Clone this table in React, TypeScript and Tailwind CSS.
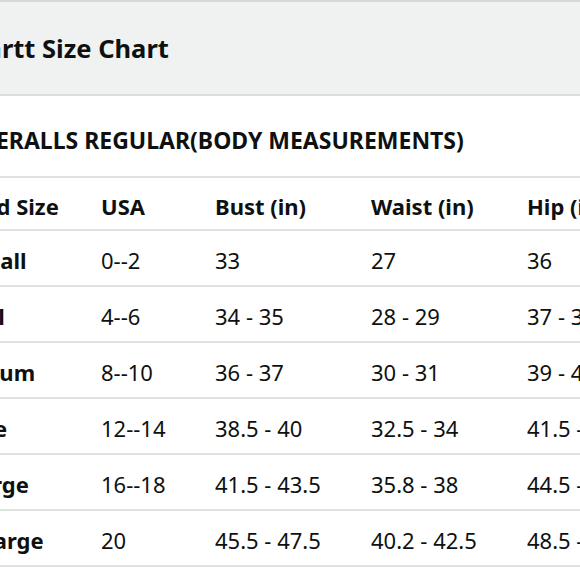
const rows = [
  ["X-Small", "0--2", "33", "27", "36"],
  ["Small", "4--6", "34 - 35", "28 - 29", "37 - 38"],
  ["Medium", "8--10", "36 - 37", "30 - 31", "39 - 40"],
  ["Large", "12--14", "38.5 - 40", "32.5 - 34", "41.5 - 43"],
  ["X-Large", "16--18", "41.5 - 43.5", "35.8 - 38", "44.5 - 46.5"],
  ["XX-Large", "20", "45.5 - 47.5", "40.2 - 42.5", "48.5 - 50.5"],
];

const cols = "grid grid-cols-[156px_114px_156px_156px_1fr] items-center";

export default function App() {
  return (
    <div className="w-[580px] h-[580px] overflow-hidden bg-white text-[#0f1111] font-['Noto_Sans','Open_Sans',sans-serif]">
      <div className="h-[96px] flex items-center bg-[#f0f2f2] border-t-2 border-b-2 border-t-[#d5d9d9] border-b-[#dcdede]">
        <h1 className="ml-[-73px] text-[25.5px] font-bold whitespace-nowrap">Carhartt Size Chart</h1>
      </div>
      <div className="h-[82px] flex items-center pt-[8px] border-b-2 border-[#e0e2e2]">
        <h2 className="ml-[-37px] text-[23px] font-bold whitespace-nowrap">OVERALLS REGULAR(BODY MEASUREMENTS)</h2>
      </div>
      <div className="ml-[-55px] w-[760px] text-[22px] whitespace-nowrap">
        <div className={`${cols} h-[53px] pt-[5px] font-bold border-b-2 border-[#e0e2e2]`}>
          <span>Brand Size</span>
          <span>USA</span>
          <span>Bust (in)</span>
          <span>Waist (in)</span>
          <span>Hip (in)</span>
        </div>
        {rows.map((r) => (
          <div key={r[0]} className={`${cols} h-[56px] pt-[5px] border-b-2 border-[#e0e2e2]`}>
            <span className="font-bold">{r[0]}</span>
            <span>{r[1]}</span>
            <span>{r[2]}</span>
            <span>{r[3]}</span>
            <span>{r[4]}</span>
          </div>
        ))}
      </div>
    </div>
  );
}
